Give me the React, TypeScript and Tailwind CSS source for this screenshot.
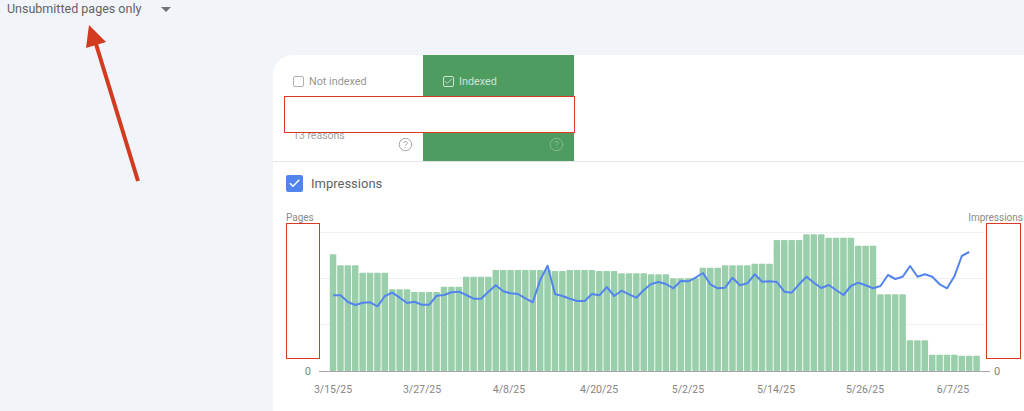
import { Check, CircleHelp } from "lucide-react";

const barGroups: [number, number][] = [
  [1, 148], [3, 181], [4, 203], [3, 253], [4, 261], [3, 245], [4, 215], [8, 195], [2, 198], [4, 195], [3, 198],
  [4, 205], [3, 208], [4, 220], [3, 188], [4, 181], [3, 176], [4, 105], [3, 88], [4, 98], [3, 122], [4, 268],
  [3, 406], [4, 449], [3, 452],
];
const bars = barGroups.flatMap(([n, top]) => Array.from({ length: n }, () => top));
const lineValues = [
  271, 271, 291, 300, 293, 292, 304, 273, 263, 278, 294, 290, 299, 299, 272, 270, 262, 260, 270, 281, 281, 260, 241,
  259, 265, 267, 280, 292, 225, 182, 267, 273, 281, 288, 288, 267, 271, 246, 273, 257, 268, 278, 255, 237, 231, 237,
  250, 228, 229, 218, 204, 238, 250, 248, 218, 241, 235, 208, 230, 229, 231, 260, 263, 238, 215, 233, 249, 240, 255,
  270, 243, 233, 241, 250, 243, 210, 222, 215, 183, 215, 208, 215, 238, 250, 214, 153, 141,
];

// The svg starts at page x=273, y=225.
const X0 = 273;
const Y0 = 225;
const py = (z: number) => 205 + z / 3 - Y0;
const pitch = 7.397;
const barX = (i: number) => 329.8 + pitch * i - X0;
const linePoints = lineValues.map((v, i) => `${(barX(i) + 3.3).toFixed(1)},${py(v).toFixed(1)}`).join(" ");
const dates: [string, number][] = [
  ["3/15/25", 333], ["3/27/25", 422], ["4/8/25", 509], ["4/20/25", 599],
  ["5/2/25", 688], ["5/14/25", 776], ["5/26/25", 865], ["6/7/25", 953],
];

function MiniBox({ checked }: { checked?: boolean }) {
  return (
    <span
      className={`flex h-[11px] w-[11px] items-center justify-center rounded-[2px] border ${
        checked ? "border-[#cfe3d4]" : "border-[#b0b0b0]"
      }`}
    >
      {checked && <Check size={9} strokeWidth={2} className="text-[#e6f1e9]" />}
    </span>
  );
}

export default function App() {
  return (
    <div
      className="relative flex h-[411px] w-[1024px] flex-col overflow-hidden bg-[#f1f4f9]"
      style={{ fontFamily: "Roboto, sans-serif" }}
    >
      <div className="flex h-[55px] shrink-0 items-start pl-[7px] pt-[1px]">
        <span className="text-[12.5px] leading-[16px] text-[#5f6368]">Unsubmitted pages only</span>
        <span className="ml-[20px] mt-[6px] h-0 w-0 border-x-[5px] border-t-[5px] border-x-transparent border-t-[#6f7378]" />
      </div>

      <div className="ml-[273px] flex flex-1 flex-col rounded-tl-[20px] bg-white">
        <div className="flex h-[107px] shrink-0 border-b border-[#e4e6e9]">
          <div className="flex w-[150px] flex-col pl-[20px] pt-[21px]">
            <div className="flex items-center gap-[5px] text-[10.8px] leading-[11px] text-[#969696]">
              <MiniBox />
              <span>Not indexed</span>
            </div>
            <div className="mt-[43px] text-[10.5px] leading-[12px] text-[#a0a0a0]">13 reasons</div>
            <div className="flex justify-end pr-[10px]">
              <CircleHelp size={15} strokeWidth={1.6} className="-mt-[5px] text-[#a8a8a8]" />
            </div>
          </div>
          <div className="flex h-[106px] w-[151px] flex-col bg-[#4f9c60] pl-[20px] pt-[21px]">
            <div className="flex items-center gap-[5px] text-[10.8px] leading-[11px] text-[#cfe3d4]">
              <MiniBox checked />
              <span>Indexed</span>
            </div>
            <div className="mt-[53px] flex justify-end pr-[10px]">
              <CircleHelp size={15} strokeWidth={1.6} className="-mt-[3px] text-[#82bb8f]" />
            </div>
          </div>
        </div>

        <div className="flex items-center gap-[8px] pl-[13px] pt-[13px]">
          <span className="flex h-[17px] w-[17px] items-center justify-center rounded-[2px] bg-[#5383ec]">
            <Check size={13} strokeWidth={2.6} className="text-white" />
          </span>
          <span className="text-[13px] leading-[17px] text-[#5f6368]">Impressions</span>
        </div>

        <div className="mt-[20px] flex justify-between pl-[13px] pr-[1px] text-[10px] leading-[12px] text-[#8a8a8a]">
          <span>Pages</span>
          <span>Impressions</span>
        </div>

        <svg width={751} height={186} viewBox="0 0 751 186" className="mt-[1px] block">
          {[232, 278, 324].map((y) => (
            <line key={y} x1={47} x2={712} y1={y - Y0 + 0.5} y2={y - Y0 + 0.5} stroke="#efefef" />
          ))}
          {bars.map((top, i) => (
            <rect
              key={i}
              x={barX(i)}
              y={py(top)}
              width={6.5}
              height={(498 - top) / 3}
              rx={0.8}
              fill="#9acfab"
            />
          ))}
          <line x1={46} x2={717} y1={146.5} y2={146.5} stroke="#a6a6a6" />
          <polyline points={linePoints} fill="none" stroke="#5484ed" strokeWidth={2} strokeLinejoin="round" />
          <text x={38} y={150} textAnchor="end" fontSize={11} fill="#858585">0</text>
          <text x={721} y={150} fontSize={11} fill="#858585">0</text>
          {dates.map(([d, x]) => (
            <text key={d} x={x - X0} y={168} textAnchor="middle" fontSize={10.5} fill="#858585">
              {d}
            </text>
          ))}
        </svg>
      </div>

      <div className="absolute left-[284px] top-[96px] h-[37px] w-[291px] border border-[#d93a25] bg-white" />
      <div className="absolute left-[286px] top-[223px] h-[136px] w-[34px] border border-[#d93a25] bg-white" />
      <div className="absolute left-[986px] top-[223px] h-[136px] w-[35px] border border-[#d93a25] bg-white" />

      <svg className="absolute left-[80px] top-[20px]" width={70} height={170} viewBox="80 20 70 170">
        <line x1={138} y1={181} x2={96} y2={44} stroke="#d23b20" strokeWidth={4} />
        <polygon points="89,25 86,48 106,42" fill="#d23b20" />
      </svg>
    </div>
  );
}
